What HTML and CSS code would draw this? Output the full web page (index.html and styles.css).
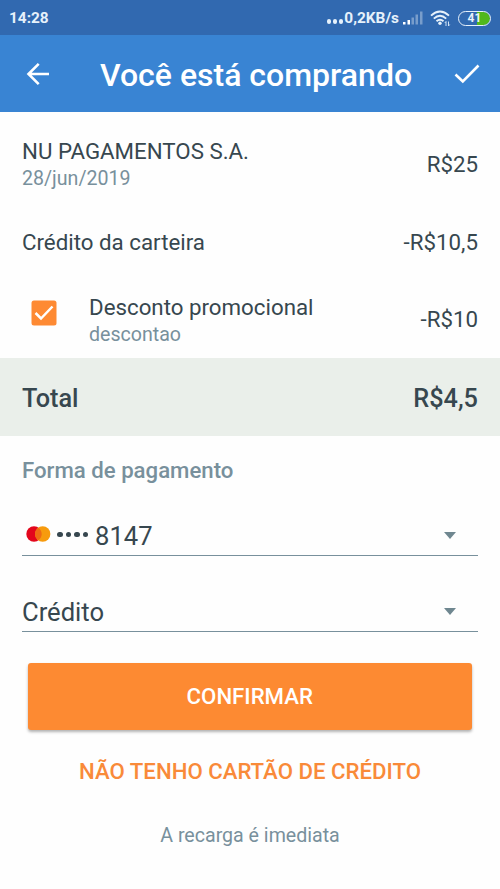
FILE: index.html
```
<!DOCTYPE html>
<html lang="pt-BR">
<head>
<meta charset="utf-8">
<title>Você está comprando</title>
<link rel="stylesheet" href="styles.css">
</head>
<body>
<div class="status">
  <span class="clock">14:28</span>
  <span class="dots"><i></i><i></i><i></i></span>
  <span class="speed">0,2KB/s</span>
  <svg class="signal" width="20" height="14" viewBox="0 0 20 14">
    <path fill="#fff" d="M0 11h2.500v2.500H0zM4.500 9H7v4.500H4.500z"/>
    <path fill="#fff" opacity=".35" d="M8.500 6.500H11v7H8.500zM12.500 3.500H15v10h-2.500zM17 .5h2.500v13H17z"/>
  </svg>
  <svg class="wifi" width="21" height="17" viewBox="0 0 21 17">
    <g fill="none" stroke="#e6f1fb" stroke-width="1.900">
      <path d="M1 5.600Q10 -2.400 19 5.600"/>
      <path d="M3.800 8.600Q10 3 16.200 8.600"/>
      <path d="M6.500 11.300Q10 8 13.500 11.300"/>
    </g>
    <circle cx="10" cy="13.200" r="1.700" fill="#e6f1fb"/>
    <path d="M16 16v-4.500M14.800 13l1.200-1.500M18.500 11.500V16M19.700 14.500L18.500 16" stroke="#cfe2f5" fill="none"/>
  </svg>
  <span class="battery">41</span>
</div>
<header class="appbar">
  <svg class="back" width="24" height="24" viewBox="0 0 24 24" fill="none" stroke="#fff" stroke-width="2.600"><path d="M12.700 1.800L2.500 12l10.200 10.200M2.500 12H23"/></svg>
  <h1>Você está comprando</h1>
  <svg class="done" width="26" height="20" viewBox="0 0 26 20" fill="none" stroke="#fff" stroke-width="2.600"><path d="M1.500 10.500L8.800 17.500L24.500 1.500"/></svg>
</header>
<main>
  <section class="items">
    <div class="row">
      <div class="label"><div class="name">NU PAGAMENTOS S.A.</div><div class="sub">28/jun/2019</div></div>
      <div class="amount">R$25</div>
    </div>
    <div class="row">
      <div class="name single">Crédito da carteira</div>
      <div class="amount">-R$10,5</div>
    </div>
    <div class="row">
      <svg class="check" width="26" height="26" viewBox="0 0 26 26"><rect x=".5" y=".5" width="25" height="25" rx="2.500" fill="#fe8a33"/><path d="M4.500 13L10 18.500L21.500 6.500" fill="none" stroke="#fff" stroke-width="2.500"/></svg>
      <div class="label"><div class="name">Desconto promocional</div><div class="sub">descontao</div></div>
      <div class="amount">-R$10</div>
    </div>
  </section>
  <div class="total"><span>Total</span><span>R$4,5</span></div>
  <section class="payment">
    <h2>Forma de pagamento</h2>
    <div class="select card">
      <svg class="brand" width="25" height="16" viewBox="0 0 25 16"><circle cx="8" cy="8" r="7.700" fill="#e3061c"/><circle cx="16.700" cy="8" r="7.700" fill="#f79b0d"/><path d="M12.350 1.650a7.700 7.700 0 0 1 0 12.700a7.700 7.700 0 0 1 0-12.700" fill="#ef6b14"/></svg>
      <span class="mask"><i></i><i></i><i></i><i></i></span>
      <span>8147</span>
      <b class="caret"></b>
    </div>
    <div class="select"><span>Crédito</span><b class="caret"></b></div>
    <button class="confirm">CONFIRMAR</button>
    <a class="nocard">NÃO TENHO CARTÃO DE CRÉDITO</a>
    <p class="note">A recarga é imediata</p>
  </section>
</main>
</body>
</html>
```
FILE: styles.css
```
* { box-sizing: border-box; }
body { margin: 0; height: 889px; overflow: hidden; background: #fefefe; color: #37474f; font-family: Roboto, "Liberation Sans", sans-serif; font-size: 22.3px; }
svg { display: block; flex: none; }
.status { height: 35px; background: #3169b0; display: flex; align-items: center; padding: 1px 9px 0 9px; color: #e6f1fb; font-size: 15.4px; font-weight: 700; }
.clock { margin-right: auto; }
.dots { display: flex; gap: 1.500px; padding-top: 7px; margin-right: 1px; }
.dots i { width: 4.500px; height: 4.500px; border-radius: 50%; background: #e6f1fb; }
.signal { margin-left: 4px; }
.wifi { margin-left: 7px; }
.battery { width: 33px; height: 15px; margin-left: 7px; border: 1.500px solid #e6f1fb; border-radius: 8px; background: linear-gradient(90deg, #3169b0 18px, #50b81c 18px); background-clip: padding-box; font-size: 12px; line-height: 13px; text-align: center; }
.appbar { height: 77px; background: #3984d3; color: #fff; display: flex; align-items: center; padding: 0 20px 0 26px; }
.appbar h1 { margin: 3px 0 0 50px; font-size: 32px; line-height: 40px; font-weight: 500; white-space: nowrap; }
.done { margin-left: auto; }
.items { padding-top: 13px; }
.row { height: 78px; display: flex; align-items: center; padding: 0 22px; }
.row:last-child { height: 77px; }
.name { line-height: 28px; white-space: nowrap; }
.single { margin-top: -1px; }
.label { padding-top: 2px; }
.sub { font-size: 19.600px; line-height: 28px; color: #78909c; }
.amount { margin: -1px 0 0 auto; }
.check { margin: -14px 32px 0 9px; }
.total { height: 78px; background: #eaefea; display: flex; align-items: center; justify-content: space-between; padding: 2px 22px 0; font-size: 25.300px; font-weight: 500; }
.payment { padding: 19px 22px 0; display: flex; flex-direction: column; }
.payment h2 { margin: 0 0 27px; font-size: 22.200px; line-height: 30px; font-weight: 500; color: #78909c; }
.select { height: 44px; border-bottom: 1.500px solid #78909c; display: flex; align-items: center; font-size: 25.600px; padding: 4px 22px 0 0; margin-bottom: 32px; }
.brand { margin: -3px 6px 0 4px; }
.mask { display: flex; gap: 3px; margin: -2px 7px 0 0; }
.mask i { width: 5.500px; height: 5.500px; border-radius: 50%; background: #37474f; }
.caret { margin-left: auto; border: 6.500px solid transparent; border-top: 7px solid #6f8790; border-bottom: 0; }
.confirm { margin: -1px 6px 0 5.500px; height: 67px; padding-bottom: 3px; border: 0; border-radius: 3px; background: #fd8a32; color: #fff; font: 500 22.200px Roboto, sans-serif; box-shadow: 0 2px 3px rgba(0,0,0,.3); }
.nocard { margin-top: 26px; text-align: center; line-height: 30px; font-size: 22.2px; font-weight: 500; color: #f98a39; white-space: nowrap; }
.note { margin: 36px 0 0; text-align: center; font-size: 19.600px; line-height: 28px; color: #78909c; }
```
